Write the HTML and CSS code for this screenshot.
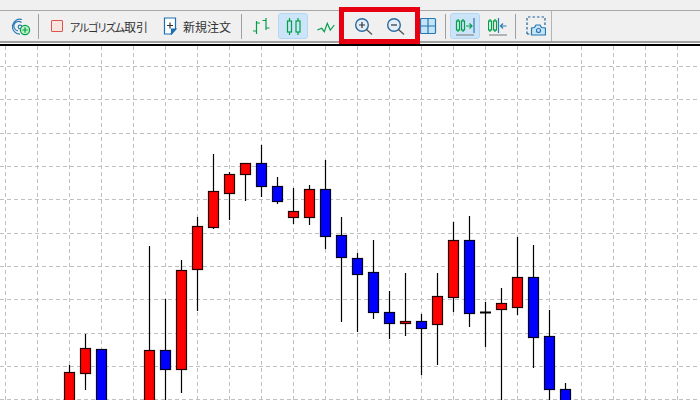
FILE: index.html
```html
<!DOCTYPE html>
<html lang="ja">
<head>
  <meta charset="UTF-8">
  <title>Chart toolbar</title>
  <link rel="stylesheet" href="styles.css">
</head>
<body>
  <div class="menu-strip"></div>

  <div class="toolbar">
    <div class="tool">
      <svg class="icon" viewBox="0 0 20 20">
        <path class="i-blue" d="M11 3.500A7.500 7.500 0 1 0 9 18.200M10.500 6.500A4.700 4.700 0 1 0 7 14.800"/>
        <circle class="i-blue" cx="9" cy="11" r="1.800"/>
        <circle class="i-plus" cx="14" cy="14" r="4.600"/>
        <path class="i-green" d="M14 11.300v5.400M11.300 14h5.400"/>
      </svg>
    </div>
    <div class="sep"></div>

    <div class="tool-text algo">
      <span class="algo-box"></span>
      <span class="label"><span class="kana">アルゴリズム</span>取引</span>
    </div>
    <div class="tool-text order">
      <svg class="doc" viewBox="0 0 14 18">
        <path class="i-doc" d="M1.500 1h11v11l-4.500 5h-6.500z"/>
        <path class="i-doc-fold" d="M13 12h-4.500v5z"/>
        <path class="i-dark" d="M7 5.500v6M4 8.500h6"/>
      </svg>
      <span class="label">新規注文</span>
    </div>
    <div class="sep"></div>

    <div class="tool first-chart">
      <svg class="icon" viewBox="0 0 20 20">
        <path class="i-green" d="M5.500 5v13M2 15h3.500M5.500 7h3.500M15 2v12M11.500 4.500h3.500M15 12h3.500"/>
      </svg>
    </div>
    <div class="tool active">
      <svg class="icon" viewBox="0 0 20 20">
        <path class="i-green" d="M6.500 2v3M6.500 16v3M15 2v3M15 16v3"/>
        <rect class="i-green" x="4.500" y="5" width="4" height="11"/>
        <rect class="i-green" x="13" y="5" width="4" height="11"/>
      </svg>
    </div>
    <div class="tool">
      <svg class="icon" viewBox="0 0 20 20">
        <path class="i-green" d="M2.300 14l4.400-1.700 2.600 3.400 3-8.400 3 6.700 4-5"/>
      </svg>
    </div>

    <div class="tool zoom-in">
      <svg class="icon" viewBox="0 0 20 20">
        <circle class="i-lens" cx="8" cy="9" r="6.300"/>
        <path class="i-dark" d="M8 6v6M5 9h6"/>
        <path class="i-handle" d="M12.500 13.500l5.500 5"/>
      </svg>
    </div>
    <div class="tool">
      <svg class="icon" viewBox="0 0 20 20">
        <circle class="i-lens" cx="8" cy="9" r="6.300"/>
        <path class="i-dark" d="M5 9h6"/>
        <path class="i-handle" d="M12.500 13.500l5.500 5"/>
      </svg>
    </div>
    <div class="tool">
      <svg class="icon" viewBox="0 0 20 20">
        <rect class="i-pane" x="2.500" y="2.500" width="15" height="15" rx="1"/>
        <path class="i-pane-line" d="M10 2.500v15M2.500 10h15"/>
      </svg>
    </div>
    <div class="sep"></div>

    <div class="tool active wide">
      <svg class="icon" viewBox="0 0 20 20">
        <path class="i-green" d="M3 3v2M3 14v2M8 3v2M8 14v2M11 10h6M14.500 7.500l2.500 2.500-2.500 2.500"/>
        <rect class="i-green" x="1.500" y="5" width="3" height="9"/>
        <rect class="i-green" x="6.500" y="5" width="3" height="9"/>
        <path class="i-blue" d="M19 2v15"/>
        <path class="i-under" d="M1 19h18"/>
      </svg>
    </div>
    <div class="tool">
      <svg class="icon" viewBox="0 0 20 20">
        <path class="i-green" d="M2 3v2M2 14v2M7 3v2M7 14v2"/>
        <rect class="i-green" x="0.500" y="5" width="3" height="9"/>
        <rect class="i-green" x="5.500" y="5" width="3" height="9"/>
        <path class="i-blue" d="M10.500 2v15M18.500 10h-6M15 7.500l-2.500 2.500 2.500 2.500"/>
        <path class="i-under" d="M1 19h18"/>
      </svg>
    </div>
    <div class="sep"></div>

    <div class="tool last">
      <svg class="icon camera" viewBox="0 0 20 20">
        <path class="i-dash" d="M1 18V1h18v8"/>
        <path class="i-dash" d="M1 18h5"/>
        <path class="i-cam" d="M5.500 19v-7l3-.5 1.500-2.500h4l1.500 2.500 4 .5v7z"/>
        <circle class="i-blue" cx="12.500" cy="14.500" r="2"/>
      </svg>
    </div>
    <div class="end-line"></div>

    <div class="highlight"></div>
  </div>

  <div class="chart-top"></div>

  <svg class="chart" viewBox="0 46 700 354">
    <path class="grid" d="M5.500 46V400M37.500 46V400M69.500 46V400M101.500 46V400M133.500 46V400M165.500 46V400M197.500 46V400M229.500 46V400M261.500 46V400M293.500 46V400M325.500 46V400M357.500 46V400M389.500 46V400M421.500 46V400M453.500 46V400M485.500 46V400M517.500 46V400M549.500 46V400M581.500 46V400M613.500 46V400M645.500 46V400M677.500 46V400"/>
    <path class="grid" d="M0 66.500H700M0 99.500H700M0 133.500H700M0 166.500H700M0 199.500H700M0 233.500H700M0 266.500H700M0 299.500H700M0 333.500H700M0 366.500H700M0 399.500H700"/>

    <!-- wicks -->
    <path class="wick" d="M69.500 365V400M85.500 334V390M101.500 349V400M149.500 246V400M165.500 299V400M181.500 260V393M197.500 217V311M213.500 154V229M229.500 172V220M245.500 163V201M261.500 145V197M277.500 177V204M293.500 188V224M309.500 185V225M325.500 160V249M341.500 217V322M357.500 253V332M373.500 240V319M389.500 291V339M405.500 273V336M421.500 314V375M437.500 273V365M453.500 222V312M469.500 216V327M485.500 302V347M501.500 288V400M517.500 237V315M533.500 245V368M549.500 310V400M565.500 383V400"/>

    <!-- red bodies -->
    <g class="up">
      <rect x="64.500" y="372.500" width="10" height="30"/>
      <rect x="80.500" y="348.500" width="10" height="25"/>
      <rect x="144.500" y="350.500" width="10" height="52"/>
      <rect x="176.500" y="270.500" width="10" height="99"/>
      <rect x="192.500" y="226.500" width="10" height="43"/>
      <rect x="208.500" y="191.500" width="10" height="36"/>
      <rect x="224.500" y="174.500" width="10" height="19"/>
      <rect x="240.500" y="163.500" width="10" height="11"/>
      <rect x="288.500" y="211.500" width="10" height="6"/>
      <rect x="304.500" y="189.500" width="10" height="28"/>
      <rect x="400.500" y="321.500" width="10" height="2"/>
      <rect x="432.500" y="296.500" width="10" height="28"/>
      <rect x="448.500" y="240.500" width="10" height="57"/>
      <rect x="496.500" y="303.500" width="10" height="6"/>
      <rect x="512.500" y="277.500" width="10" height="30"/>
    </g>

    <!-- blue bodies -->
    <g class="down">
      <rect x="96.500" y="349.500" width="10" height="53"/>
      <rect x="160.500" y="350.500" width="10" height="19"/>
      <rect x="256.500" y="163.500" width="10" height="23"/>
      <rect x="272.500" y="186.500" width="10" height="15"/>
      <rect x="320.500" y="189.500" width="10" height="47"/>
      <rect x="336.500" y="235.500" width="10" height="22"/>
      <rect x="352.500" y="258.500" width="10" height="16"/>
      <rect x="368.500" y="272.500" width="10" height="40"/>
      <rect x="384.500" y="312.500" width="10" height="11"/>
      <rect x="416.500" y="321.500" width="10" height="7"/>
      <rect x="464.500" y="240.500" width="10" height="73"/>
      <rect x="528.500" y="277.500" width="10" height="60"/>
      <rect x="544.500" y="336.500" width="10" height="53"/>
      <rect x="560.500" y="389.500" width="10" height="13"/>
    </g>

    <!-- doji -->
    <path class="doji" d="M480 312.500H491"/>
  </svg>
</body>
</html>
```

FILE: styles.css
```css
html, body {
  margin: 0;
  height: 400px;
  overflow: hidden;
  background-color: #ffffff;
}

.menu-strip {
  height: 10px;
  background-color: #f0f0f0;
  border-bottom: 1px solid #a8a8a8;
}

.toolbar {
  position: relative;
  display: flex;
  align-items: center;
  height: 30px;
  padding-left: 5px;
  background-color: #f0f0f0;
  border-bottom: 2px solid #a0a0a0;
  font-family: "Noto Sans CJK JP", "Noto Sans", sans-serif;
  font-size: 12px;
  color: #333333;
}

.chart-top {
  margin-top: 1px;
  border-bottom: 2px solid #000000;
}

.chart {
  display: block;
  width: 700px;
  height: 354px;
}

/* toolbar items */
.tool {
  display: flex;
  align-items: center;
  justify-content: center;
  flex: none;
  width: 32px;
  height: 26px;
  box-sizing: border-box;
}

.tool.active {
  width: 30px;
  margin: 0 1px;
  background-color: #cce4f7;
  border: 1px solid #b5d7f2;
  border-radius: 3px;
}

.tool.wide {
  margin: 0 2px 0 4px;
}

.first-chart {
  margin-left: 3px;
}

.zoom-in {
  margin-left: 7px;
}

.sep {
  flex: none;
  width: 1px;
  height: 25px;
  margin-left: 1px;
  background-color: #a0a0a0;
}

.tool-text {
  display: flex;
  align-items: center;
  flex: none;
  box-sizing: border-box;
  padding-left: 12px;
}

.algo {
  width: 112px;
  gap: 7px;
}

.order {
  width: 89px;
  gap: 6px;
}

.algo-box {
  flex: none;
  width: 10px;
  height: 10px;
  background-color: #fbe3de;
  border: 1px solid #d9534f;
  border-radius: 1px;
}

.label {
  white-space: nowrap;
}

.kana {
  font-size: 11px;
  font-feature-settings: "palt";
  letter-spacing: -1px;
}

.doc {
  flex: none;
  width: 14px;
  height: 18px;
}

.icon {
  width: 20px;
  height: 20px;
}

.last {
  margin-left: 4px;
}

.end-line {
  flex: none;
  width: 1px;
  height: 30px;
  margin-left: -1px;
  background-color: #b4b4b4;
}

/* red callout round the zoom buttons */
.highlight {
  position: absolute;
  left: 339px;
  top: -4px;
  width: 71px;
  height: 27px;
  border: 5px solid #e60012;
}

/* icon strokes */
svg path, svg circle, svg rect {
  fill: none;
  stroke-width: 1.2;
}

.i-blue { stroke: #2a7ab8; }
.i-green { stroke: #00a04a; }
.i-dark { stroke: #333333; }
.i-plus { fill: #bff0c8; stroke: #00a04a; }
.i-doc { fill: #ffffff; stroke: #1c6fb0; }
.i-doc-fold { fill: #1c6fb0; stroke: #1c6fb0; }
.i-lens { fill: #e4eef8; stroke: #2a6a9c; stroke-width: 1.4; }
.i-handle { stroke: #555555; stroke-width: 1.4; }
.i-pane { fill: #c6e4f7; stroke: #2678b0; }
.i-pane-line { stroke: #2678b0; }
.i-under { stroke: #8a8a8a; }
.i-dash { stroke: #1c5f96; stroke-dasharray: 2.500 2; }
.i-cam { fill: #c6e4f7; stroke: #2678b0; }

/* chart */
.chart .grid {
  stroke: #c0c0c0;
  stroke-width: 1;
  stroke-dasharray: 4 3;
}

.chart .wick {
  stroke: #000000;
  stroke-width: 1.2;
}

.chart .up rect {
  fill: #ff0000;
  stroke: #220000;
  stroke-width: 1.2;
}

.chart .down rect {
  fill: #0000ff;
  stroke: #000022;
  stroke-width: 1.2;
}

.chart .doji {
  stroke: #000000;
  stroke-width: 2;
}
```
